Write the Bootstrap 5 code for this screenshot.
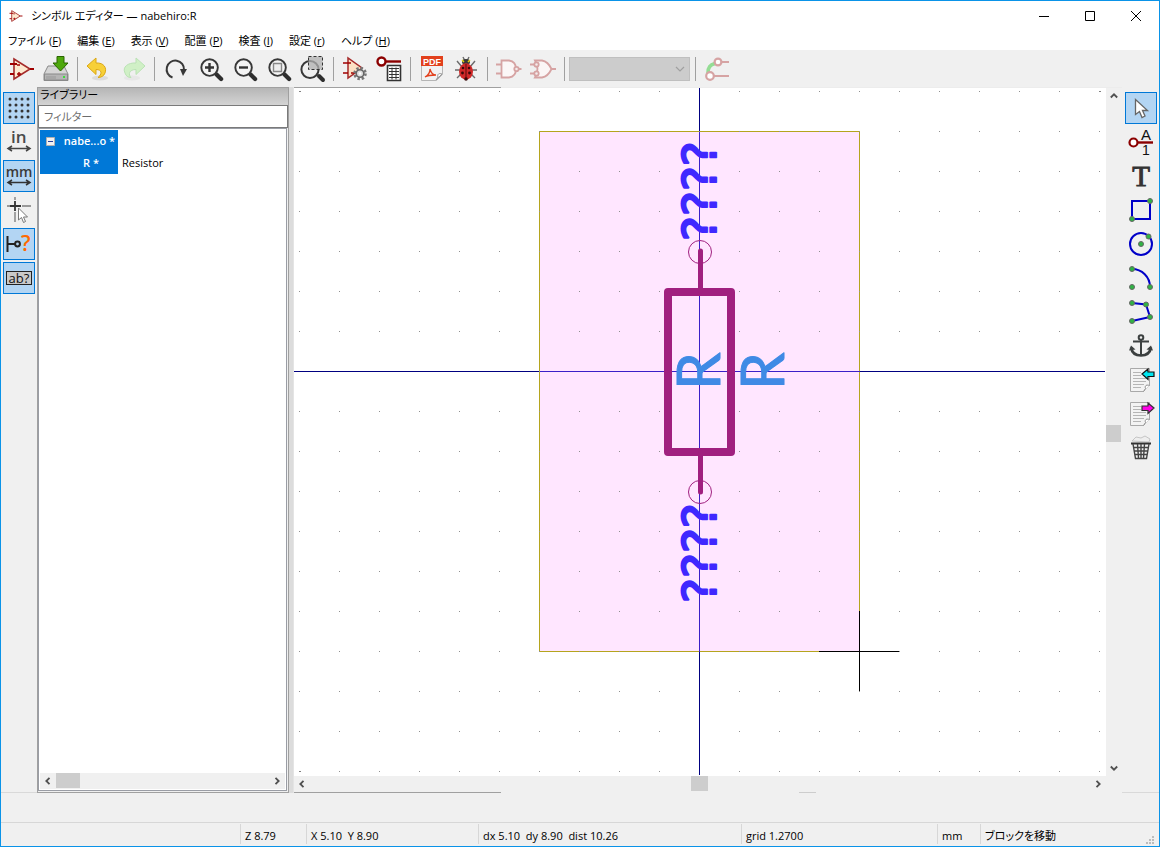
<!DOCTYPE html>
<html lang="ja">
<head>
<meta charset="utf-8">
<meta name="viewport" content="width=device-width, initial-scale=1">
<title>シンボル エディター — nabehiro:R</title>
<link rel="stylesheet" href="https://cdn.jsdelivr.net/npm/bootstrap@5.3.0/dist/css/bootstrap.min.css">
<style>
body{font-family:"Open Sans","Noto Sans CJK JP",sans-serif;font-size:11px;line-height:16px;font-feature-settings:"palt";color:#000;background:#f0f0f0;overflow:hidden}
.app-window{border:1px solid #0a93e8}
svg{display:block;overflow:visible}
button{border:0;background:none;padding:0;color:inherit}
.title-bar{height:30px;background:#fff;padding-left:8px}
.title-bar .caption-btn{width:46px;height:30px}
.menu-bar{height:19px;background:#fff;padding-left:0}
.menu-bar a{color:#000;text-decoration:none;padding:0 8px;white-space:nowrap}
.menu-bar a:first-child{padding-left:7px}
.tool-bar{height:37px;padding-left:4px}
.tool-btn{width:34px;height:34px;display:flex;align-items:center;justify-content:center;flex:none}
.tool-sep{width:1px;height:24px;margin:0 4px;background:#a0a0a0;flex:none}
.tool-bar .unit-pick{width:121px;height:24px;margin:0 1px 0 0;border:1px solid #bfbfbf;border-radius:0;background-color:#ccc;padding:0;background-image:url("data:image/svg+xml,%3Csvg xmlns='http://www.w3.org/2000/svg' viewBox='0 0 10 10'%3E%3Cpath d='M1 3l4 4 4-4' fill='none' stroke='%23a0a0a0' stroke-width='1.2'/%3E%3C/svg%3E");background-size:10px 10px;background-position:right 4px center}
.side-btn{width:32px;height:32px;display:flex;align-items:center;justify-content:center;flex:none;border:1px solid transparent}
.side-btn.is-on{border-color:#0078d7;background:#b3d5f3}
.side-left{width:36px;padding:5px 2px 0;gap:2px}
.side-right{width:37px;padding:5px 2px 0 3px;gap:2px}
.lib-pane{width:252px;border:1px solid #a0a0a0;background:#f0f0f0}
.lib-head{height:17px;padding-left:2px;line-height:14px;background:linear-gradient(#b6b6b6,#d4d4d4)}
.lib-filter{height:23px;border:1px solid #7a7a7a;border-radius:0;padding:0 5px;font-size:11px;line-height:16px;font-feature-settings:"palt";color:#000;background:#fff}
.lib-filter::placeholder{color:#6d6d6d;opacity:1}
.lib-tree{border:1px solid #9a9da5;margin:0 1px 1px 0;background:#fff;padding:1px 1px 1px 1px}
.tree-row{height:22px}
.tree-key{width:78px;height:22px;background:#0078d7;color:#fff;font-weight:600;padding-right:3px}
.tree-box{width:9px;height:9px;margin-left:6px}
.sash{width:4px;background:#dcdcdc}
.canvas-col{border-left:1px solid #e4e4e4}
.edge-line{height:1px;background:linear-gradient(90deg,#a0a0a0 25%,#ececec 25%)}
.edge-low{height:1px;background:linear-gradient(90deg,#a0a0a0 25%,#f0f0f0 25%,#f0f0f0 61%,#cdcdcd 61%,#cdcdcd 63%,#f0f0f0 63%)}
.draw-area{background:#fff}
.draw-area svg{width:100%;height:100%;overflow:hidden}
.bar-v{width:16px}
.bar-h{height:16px}
.bar-btn{width:16px;height:16px;display:flex;align-items:center;justify-content:center;flex:none}
.bar-v .bar-thumb{width:15px;height:17px;background:#cdcdcd}
.bar-h .bar-thumb{width:17px;height:15px;background:#cdcdcd}
.lib-tree .bar-h .bar-thumb{width:24px}
.lib-tree .bar-h{background:#f0f0f0}
.msg-band{height:30px;border-bottom:1px solid #d7d7d7}
.side-foot{height:1px;background:#d9d9d9}
.status-bar{height:23px;display:grid;grid-template-columns:239fr 66fr 172fr 263fr 196fr 43fr 179fr}
.status-bar>div{margin-top:1px;padding-left:4px;line-height:24px;white-space:pre;border-left:1px solid #d7d7d7;height:20px}
.status-bar>div:first-child{border-left:0}
.val-text{font-family:Lato,sans-serif;font-size:60px;fill:#3f8ae5;stroke:#3f8ae5;stroke-width:1px;stroke-linejoin:round}
.pin-text{font-family:"DejaVu Sans",sans-serif;font-size:47px;fill:#3f28ff;stroke:#3f28ff;stroke-width:2px;stroke-linejoin:round}
.glyph-in{font-family:"Open Sans",sans-serif;font-size:17px;font-weight:600;fill:#4a4a4a}
.glyph-mm{font-family:"Open Sans",sans-serif;font-size:14px;font-weight:600;fill:#3a3a3a}
</style>
</head>
<body>
<svg width="0" height="0" class="position-absolute" aria-hidden="true">
<defs>
<symbol id="opamp" viewBox="0 0 26 26"><path d="M5 3v20l16-10z" fill="#fde9d0" stroke="#a52a2a" stroke-width="1.6"/><path d="M1 8h7M1 18h4M21 13h4" stroke="#a00000" stroke-width="1.8" fill="none"/><path d="M8 18h4M10 16v4M8 9h3" stroke="#a00000" stroke-width="1.4"/></symbol>
<symbol id="lens" viewBox="0 0 26 26"><path d="M18 18l5 5" stroke="#2e2e2e" stroke-width="4.4" stroke-linecap="round"/><circle cx="11" cy="11" r="8.6" fill="#f4f4f4" stroke="#383838" stroke-width="2"/></symbol>
<symbol id="page" viewBox="0 0 26 26"><path d="M2.500 1.500h19v17l-6 6h-13z" fill="#f3f3f3" stroke="#a9a9a9"/><path d="M21.500 18.500c-3-1-5 0-4 3l-2 3" fill="#fff" stroke="#888"/><path d="M5 5.500h8M5 8.500h8M5 11.500h13M5 14.500h13M5 17.500h11M5 20.500h8" stroke="#b5b5b5"/></symbol>
<symbol id="chev" viewBox="0 0 8 8"><path d="M5.500 .8L2.300 4l3.200 3.200" fill="none" stroke="#505050" stroke-width="1.8"/></symbol>
<pattern id="gridDots" width="40" height="40" patternUnits="userSpaceOnUse"><rect x="5" y="3" width="1" height="1" fill="#909090"/></pattern>
</defs>
</svg>
<div class="app-window d-flex flex-column vh-100">
<header class="title-bar d-flex align-items-center">
  <svg width="14" height="14"><use href="#opamp"/></svg>
  <span class="ms-2 flex-grow-1">シンボル エディター — nabehiro:R</span>
  <button class="caption-btn" aria-label="最小化"><svg class="mx-auto" width="11" height="11"><path d="M0 5.500h10" stroke="#000"/></svg></button>
  <button class="caption-btn" aria-label="最大化"><svg class="mx-auto" width="11" height="11"><path d="M.5 .5h9v9h-9z" fill="none" stroke="#000"/></svg></button>
  <button class="caption-btn" aria-label="閉じる"><svg class="mx-auto" width="11" height="11"><path d="M0 0l10 10M10 0L0 10" stroke="#000"/></svg></button>
</header>
<nav class="menu-bar d-flex align-items-center">
  <a href="#">ファイル (<u>F</u>)</a><a href="#">編集 (<u>E</u>)</a><a href="#">表示 (<u>V</u>)</a><a href="#">配置 (<u>P</u>)</a><a href="#">検査 (<u>I</u>)</a><a href="#">設定 (<u>r</u>)</a><a href="#">ヘルプ (<u>H</u>)</a>
</nav>
<div class="tool-bar d-flex align-items-center" role="toolbar">
  <button class="tool-btn" aria-label="新規シンボル"><svg width="26" height="26"><use href="#opamp"/></svg></button>
  <button class="tool-btn" aria-label="保存"><svg width="26" height="26" viewBox="0 0 26 26"><path d="M5 10h16l4 8v6.500H1V18z" fill="#d6d6d6" stroke="#8a8a8a"/><path d="M1.500 18h23v6h-23z" fill="#b5b5b5" stroke="#8a8a8a"/><path d="M4 20v3M6 20v3M8 20v3M10 20v3M12 20v3" stroke="#999"/><rect x="20" y="20" width="2" height="2" fill="#3ddc3d"/><path d="M14 .5h7V7h4l-7.500 8L10 7h4z" fill="#4ea80c" stroke="#2a6400"/></svg></button>
  <span class="tool-sep"></span>
  <button class="tool-btn" aria-label="元に戻す"><svg width="26" height="26" viewBox="0 0 26 26"><ellipse cx="14" cy="22" rx="8" ry="2.500" fill="#dcdcdc"/><path d="M1 10l9-8v5c8-.500 11 5 9 10-1 3-4 4.500-7 4.500 4-3 4.500-8-2-8v5z" fill="#f7d038" stroke="#dba715"/></svg></button>
  <button class="tool-btn" aria-label="やり直し"><svg width="26" height="26" viewBox="0 0 26 26" opacity=".7"><ellipse cx="12" cy="22" rx="8" ry="2.500" fill="#e4e4e4"/><path d="M25 10l-9-8v5c-8-.500-14 4-11 10 1 3 3 4.500 6 4.500-3-3-2-8 5-8v5z" fill="#c3f1b5" stroke="#a4dd9c"/></svg></button>
  <span class="tool-sep"></span>
  <button class="tool-btn" aria-label="再描画"><svg width="26" height="26" viewBox="0 0 26 26"><path d="M9.500 21.500A8.700 8.700 0 1 1 21 14" fill="none" stroke="#383838" stroke-width="2"/><path d="M17 13h7l-4 7z" fill="#383838"/></svg></button>
  <button class="tool-btn" aria-label="ズームイン"><svg width="26" height="26" viewBox="-2 -1 26 26"><use href="#lens" width="25" height="25"/><path d="M6 10.500h9M10.500 6v9" stroke="#333" stroke-width="2.400"/></svg></button>
  <button class="tool-btn" aria-label="ズームアウト"><svg width="26" height="26" viewBox="-2 -1 26 26"><use href="#lens" width="25" height="25"/><path d="M6 10.500h9" stroke="#333" stroke-width="2.400"/></svg></button>
  <button class="tool-btn" aria-label="全体表示"><svg width="26" height="26" viewBox="-2 -1 26 26"><use href="#lens" width="25" height="25"/><path d="M6.500 6.500h8v8h-8z" fill="#eee" stroke="#888" stroke-width="1.400"/></svg></button>
  <button class="tool-btn" aria-label="選択範囲をズーム"><svg width="26" height="26" viewBox="-1 0 26 26"><path d="M19 20l4 4" stroke="#2e2e2e" stroke-width="4" stroke-linecap="round"/><circle cx="10" cy="13.500" r="8.600" fill="#f0f0f0" stroke="#383838" stroke-width="2"/><path d="M8.500 .5h14v13h-14z" fill="#b0b0b0" fill-opacity=".75" stroke="#333" stroke-dasharray="3 2"/></svg></button>
  <span class="tool-sep"></span>
  <button class="tool-btn" aria-label="シンボルのプロパティ"><svg width="26" height="26" viewBox="0 0 26 26"><path d="M6 2v20l14-10z" fill="#fde0c4" stroke="#a52a2a" stroke-width="1.500"/><path d="M1 7h8M1 17h5M9 17h3" stroke="#a00000" stroke-width="1.600"/><circle cx="18" cy="17.500" r="5.500" fill="none" stroke="#777" stroke-width="2.600" stroke-dasharray="2.400 1.900"/><circle cx="18" cy="17.500" r="3.800" fill="#ddd" stroke="#666" stroke-width="1.600"/><circle cx="18" cy="17.500" r="1.300" fill="#fff"/></svg></button>
  <button class="tool-btn" aria-label="ピン テーブル"><svg width="26" height="26" viewBox="0 0 26 26"><path d="M9 5.500h16" stroke="#8b0000" stroke-width="2.400"/><circle cx="5.500" cy="5.500" r="4" fill="#fff" stroke="#8b0000" stroke-width="2.400"/><path d="M11.500 9.500h13v15h-13z" fill="#fff" stroke="#333" stroke-width="1.600"/><path d="M13 12.500h10M13 15.500h10M13 18.500h10M13 21.500h10M16 11.500v12M20 11.500v12" stroke="#333"/></svg></button>
  <span class="tool-sep"></span>
  <button class="tool-btn" aria-label="データシート"><svg width="26" height="26" viewBox="0 0 26 26"><path d="M2.500 1.500h21v17l-6 6h-15z" fill="#f2f2f2" stroke="#b5b5b5"/><rect x="2" y="0" width="22" height="10" fill="#e2401c"/><text x="4" y="9" font-family="Liberation Sans" font-size="9" font-weight="700" fill="#fff">PDF</text><path d="M6 21c4-2 5-5 5-8 1 4 3 6 6 6-4 0-8 0-11 2z" fill="none" stroke="#e2401c" stroke-width="1.300"/><path d="M23 18c-3-1-5 0-4 3l-2 3z" fill="#fff" stroke="#999"/></svg></button>
  <button class="tool-btn" aria-label="検査"><svg width="26" height="26" viewBox="0 0 26 26"><path d="M4 5l5 6M22 5l-5 6M2 14h6M24 14h-6M4 22l5-5M22 22l-5-5M10 1l2 4M16 1l-2 4" stroke="#6b6b6b" stroke-width="1.400"/><ellipse cx="13" cy="6" rx="4" ry="3" fill="#383838"/><ellipse cx="13" cy="15.500" rx="7" ry="8.300" fill="#d02828"/><path d="M13 8v15" stroke="#5a0808"/><g fill="#3a0a0a"><circle cx="10" cy="12" r="1.300"/><circle cx="16" cy="12" r="1.300"/><circle cx="9.500" cy="17" r="1.400"/><circle cx="16.500" cy="17" r="1.400"/><circle cx="13" cy="23" r="1.800"/></g><path d="M9 4l2 2M17 4l-2 2" stroke="#e5d512" stroke-width="1.500"/></svg></button>
  <span class="tool-sep"></span>
  <button class="tool-btn" aria-label="標準表記"><svg width="26" height="26" viewBox="0 0 26 26" fill="none" stroke="#d6a3a3" stroke-width="1.800"><path d="M5.500 4.500h7.500q7 1 7 8.500t-7 8.500H5.500z" fill="#fbf6f6"/><path d="M0 8.500h5M0 17.500h5M22.500 13h3"/><circle cx="20.500" cy="13" r="2.200" fill="#f4ecec"/></svg></button>
  <button class="tool-btn" aria-label="代替表記"><svg width="26" height="26" viewBox="0 0 26 26" fill="none" stroke="#d6a3a3" stroke-width="1.800"><path d="M5 4.500h7q6 1 9.500 8.500-3.500 7.500-9.500 8.500H5q5-8 0-17z" fill="#fbf6f6"/><path d="M0 8.500h4M0 17.500h4M21 13h5"/><circle cx="6.500" cy="8.500" r="2.200" fill="#f4ecec"/><circle cx="6.500" cy="17.500" r="2.200" fill="#f4ecec"/></svg></button>
  <span class="tool-sep"></span>
  <select class="unit-pick form-select" aria-label="ユニット" disabled><option></option></select>
  <span class="tool-sep"></span>
  <button class="tool-btn" aria-label="同期ピン編集"><svg width="26" height="26" viewBox="0 0 26 26" fill="none" stroke="#d6a3a3" stroke-width="2.200"><path d="M17 6h8M9 20h16"/><path d="M4 17C4 11 6 9 11 7.500" stroke="#94dd94" stroke-width="3.600"/><circle cx="14" cy="6" r="3.400" fill="#fff"/><circle cx="6" cy="20" r="3.800" fill="#fff"/></svg></button>
</div>
<main class="d-flex flex-grow-1" style="min-height:0">
  <div class="d-flex flex-column">
    <div class="side-left d-flex flex-column flex-grow-1">
      <button class="side-btn is-on" aria-label="グリッド表示"><svg width="24" height="24" viewBox="0 0 24 24"><path d="M3 3h20M3 9h20M3 15h20M3 21h20" stroke="#333" stroke-width="3" stroke-linecap="round" stroke-dasharray="0 6"/></svg></button>
      <button class="side-btn" aria-label="インチ"><svg width="26" height="26" viewBox="0 0 26 26"><text x="5" y="14" class="glyph-in">in</text><path d="M2 19.500h22M6 17l-4 2.500L6 22M20 17l4 2.500-4 2.500" fill="none" stroke="#444" stroke-width="1.500"/></svg></button>
      <button class="side-btn is-on" aria-label="ミリメートル"><svg width="26" height="26" viewBox="0 0 26 26"><text x="13" y="14" text-anchor="middle" class="glyph-mm">mm</text><path d="M2 19.500h22M6 17l-4 2.500L6 22M20 17l4 2.500-4 2.500" fill="none" stroke="#333" stroke-width="1.500"/></svg></button>
      <button class="side-btn" aria-label="カーソル形状"><svg width="26" height="26" viewBox="0 0 26 26"><path d="M1 9h3M16 9h9M9 0v3M9 15v10" stroke="#999" stroke-width="1.800"/><path d="M4 9h11M9 4v10" stroke="#333" stroke-width="1.800"/><path d="M12.500 11v12l3-2.500 2 5 2-1-2-4.500h4z" fill="#fff" stroke="#777"/></svg></button>
      <button class="side-btn is-on" aria-label="ピンの電気タイプ"><svg width="28" height="26" viewBox="0 0 28 26"><path d="M2.500 5v16M3 13h8" stroke="#222" stroke-width="2"/><circle cx="12.500" cy="13" r="2.400" fill="none" stroke="#222" stroke-width="2"/><text x="16" y="20" font-family="Open Sans" font-size="21" font-weight="600" fill="#ff6a00">?</text></svg></button>
      <button class="side-btn is-on" aria-label="フィールド表示"><svg width="28" height="26" viewBox="0 0 28 26"><rect x="1.500" y="6.500" width="25" height="13" fill="#c9c9c9" stroke="#222"/><text x="14" y="18" text-anchor="middle" font-family="Open Sans" font-size="13" fill="#111">ab?</text></svg></button>
    </div>
    <div class="side-foot"></div>
  </div>
  <section class="lib-pane d-flex flex-column flex-shrink-0">
    <div class="lib-head">ライブラリー</div>
    <input class="lib-filter form-control" type="text" placeholder="フィルター" aria-label="フィルター">
    <div class="lib-tree d-flex flex-column flex-grow-1" role="tree">
      <div class="tree-row d-flex" role="treeitem"><div class="tree-key d-flex align-items-center justify-content-between"><svg class="tree-box" viewBox="0 0 9 9"><path d="M.5 .5h8v8h-8z" fill="#f2f2f2" stroke="#b0b0b0"/><path d="M2 4.500h5" stroke="#2a3f9c"/></svg><span>nabe...o *</span></div></div>
      <div class="tree-row d-flex align-items-center" role="treeitem"><div class="tree-key d-flex align-items-center justify-content-end"><span class="pe-3">R *</span></div><span class="ms-1">Resistor</span></div>
      <div class="flex-grow-1"></div>
      <div class="bar-h d-flex"><button class="bar-btn" aria-label="左へ"><svg width="8" height="8"><use href="#chev"/></svg></button><div class="bar-thumb"></div><div class="flex-grow-1"></div><button class="bar-btn" aria-label="右へ"><svg width="8" height="8" transform="rotate(180)"><use href="#chev"/></svg></button></div>
    </div>
  </section>
  <div class="sash"></div>
  <section class="canvas-col d-flex flex-column flex-grow-1">
    <div class="edge-line"></div>
    <div class="d-flex flex-grow-1" style="min-height:0">
      <div class="draw-area flex-grow-1">
        <svg viewBox="0 0 812 688" preserveAspectRatio="xMidYMid slice">
          <rect x="245.500" y="43.500" width="320" height="520" fill="#ffe6ff" stroke="#b5a51e" stroke-width="1"/>
          <rect width="812" height="688" fill="url(#gridDots)"/>
          <path d="M5 3.500h2M805 3.500h2M5 683.500h2" stroke="#808080"/>
          <path d="M0 283.500h245M566 283.500h245M405.500 0v43M405.500 564v123" stroke="#000080"/>
          <path d="M246 283.500h320M405.500 44v520" stroke="#3a20c8"/>
          <g fill="none" stroke="#a0207f"><rect x="374" y="204" width="63" height="160" stroke-width="8" stroke-linejoin="round"/><path d="M406.500 163v40M406.500 365v39" stroke-width="5" stroke-linecap="round"/><circle cx="406" cy="164" r="11.500"/><circle cx="406" cy="404" r="11.500"/></g>
          <path d="M525 563.500h80M565.500 523v80" stroke="#000"/>
          <text class="pin-text" transform="translate(422 153) rotate(-90)">????</text>
          <text class="pin-text" transform="translate(422 515) rotate(-90)">????</text>
          <text class="val-text" transform="translate(426 302) rotate(-90)">R</text>
          <text class="val-text" transform="translate(490 302) rotate(-90)">R</text>
        </svg>
      </div>
      <div class="bar-v d-flex flex-column"><button class="bar-btn" aria-label="上へ"><svg width="8" height="8" transform="rotate(90)"><use href="#chev"/></svg></button><div style="flex-grow:321"></div><div class="bar-thumb"></div><div style="flex-grow:318"></div><button class="bar-btn" aria-label="下へ"><svg width="8" height="8" transform="rotate(-90)"><use href="#chev"/></svg></button></div>
    </div>
    <div class="bar-h d-flex me-3"><button class="bar-btn" aria-label="左へ"><svg width="8" height="8"><use href="#chev"/></svg></button><div style="flex-grow:381"></div><div class="bar-thumb"></div><div style="flex-grow:382"></div><button class="bar-btn" aria-label="右へ"><svg width="8" height="8" transform="rotate(180)"><use href="#chev"/></svg></button></div>
    <div class="edge-low"></div>
  </section>
  <div class="d-flex flex-column">
    <div class="side-right d-flex flex-column flex-grow-1">
      <button class="side-btn is-on" aria-label="選択"><svg width="26" height="26" viewBox="0 0 26 26"><path d="M7.500 4.500v15l4-3 2.500 6 3-1.500-2.500-5.500h5z" fill="#fff" stroke="#666" stroke-width="1.300"/></svg></button>
      <button class="side-btn" aria-label="ピンを追加"><svg width="26" height="28" viewBox="0 0 26 28"><path d="M10 14.500h15" stroke="#8b0000" stroke-width="2.400"/><circle cx="5.500" cy="14.500" r="4" fill="#fff" stroke="#8b0000" stroke-width="2.200"/><text x="13" y="12" font-family="Liberation Sans" font-size="15" fill="#111">A</text><text x="14" y="27" font-family="Liberation Sans" font-size="14" fill="#111">1</text></svg></button>
      <button class="side-btn" aria-label="テキストを追加"><svg width="26" height="26" viewBox="0 0 26 26"><text x="13" y="23" text-anchor="middle" font-family="Liberation Serif" font-size="29" fill="#333" stroke="#333">T</text></svg></button>
      <button class="side-btn" aria-label="矩形を追加"><svg width="26" height="26" viewBox="0 0 26 26"><path d="M4 4h18v18H4z" fill="none" stroke="#0000c8" stroke-width="2"/><g fill="#2fb344" stroke="#666"><circle cx="22" cy="4" r="2.500"/><circle cx="4" cy="22" r="2.500"/></g></svg></button>
      <button class="side-btn" aria-label="円を追加"><svg width="26" height="26" viewBox="0 0 26 26"><circle cx="13" cy="13" r="11" fill="none" stroke="#0000c8" stroke-width="2"/><g fill="#2fb344" stroke="#666"><circle cx="20.500" cy="5.500" r="2.500"/><circle cx="13" cy="13" r="2.500"/></g></svg></button>
      <button class="side-btn" aria-label="円弧を追加"><svg width="26" height="26" viewBox="0 0 26 26"><path d="M4 4c10 0 18 8 18 18" fill="none" stroke="#0000c8" stroke-width="2"/><g fill="#2fb344" stroke="#666"><circle cx="4" cy="4" r="2.500"/><circle cx="4" cy="22" r="2.500"/><circle cx="22" cy="22" r="2.500"/></g></svg></button>
      <button class="side-btn" aria-label="多角線を追加"><svg width="26" height="26" viewBox="0 0 26 26"><path d="M4 4l14 1.500 4 12.500L4 22" fill="none" stroke="#0000c8" stroke-width="2"/><g fill="#2fb344" stroke="#666"><circle cx="4" cy="4" r="2.500"/><circle cx="18" cy="5.500" r="2.500"/><circle cx="22" cy="18" r="2.500"/><circle cx="4" cy="22" r="2.500"/></g></svg></button>
      <button class="side-btn" aria-label="アンカー"><svg width="26" height="26" viewBox="0 0 26 26" fill="none" stroke="#3c4040" stroke-width="2"><circle cx="13" cy="4.500" r="2.300"/><path d="M5 8.500h16M13 7v16" /><path d="M3 14.500c1 6 5 8 10 8s9-2 10-8" stroke-width="2.600"/><path d="M1 17.500l2-5 4.500 4zM25 17.500l-2-5-4.500 4z" fill="#3c4040" stroke="none"/></svg></button>
      <button class="side-btn" aria-label="シンボルをインポート"><svg width="28" height="26" viewBox="-1 0 28 26"><use href="#page" width="26" height="26"/><path d="M14 7l6-5v3h6v4.500h-6v3z" fill="#00e5ee" stroke="#111" stroke-width="1.200"/></svg></button>
      <button class="side-btn" aria-label="シンボルをエクスポート"><svg width="28" height="26" viewBox="-1 0 28 26"><use href="#page" width="26" height="26"/><path d="M26 7l-6-5v3h-6v4.500h6v3z" fill="#ff00e6" stroke="#333" stroke-width="1.200"/></svg></button>
      <button class="side-btn" aria-label="削除"><svg width="26" height="26" viewBox="0 0 26 26"><path d="M4 6l4-4 5 1 4-2 5 3-1 3z" fill="#eee" stroke="#c5c5c5"/><path d="M3 8.500h20" stroke="#333" stroke-width="2"/><path d="M5 9l2.500 14.500h11L21 9M9.500 9l1 14M13 9v14M16.500 9l-1 14M5.500 12.500h15M6 16h14M7 19.500h12" fill="none" stroke="#444" stroke-width="1.400"/></svg></button>
    </div>
    <div class="side-foot"></div>
  </div>
</main>
<div class="msg-band flex-shrink-0"></div>
<footer class="status-bar flex-shrink-0"><div></div><div>Z 8.79</div><div>X 5.10  Y 8.90</div><div>dx 5.10  dy 8.90  dist 10.26</div><div>grid 1.2700</div><div>mm</div><div class="d-flex justify-content-between"><span>ブロックを移動</span><svg class="align-self-end me-1" width="9" height="9"><path d="M0 7h2v2H0zM3 7h2v2H3zM6 7h2v2H6zM3 4h2v2H3zM6 4h2v2H6zM6 1h2v2H6z" fill="#bcbcbc"/></svg></div></footer>
</div>
<script src="https://cdn.jsdelivr.net/npm/bootstrap@5.3.0/dist/js/bootstrap.bundle.min.js"></script>
</body>
</html>
